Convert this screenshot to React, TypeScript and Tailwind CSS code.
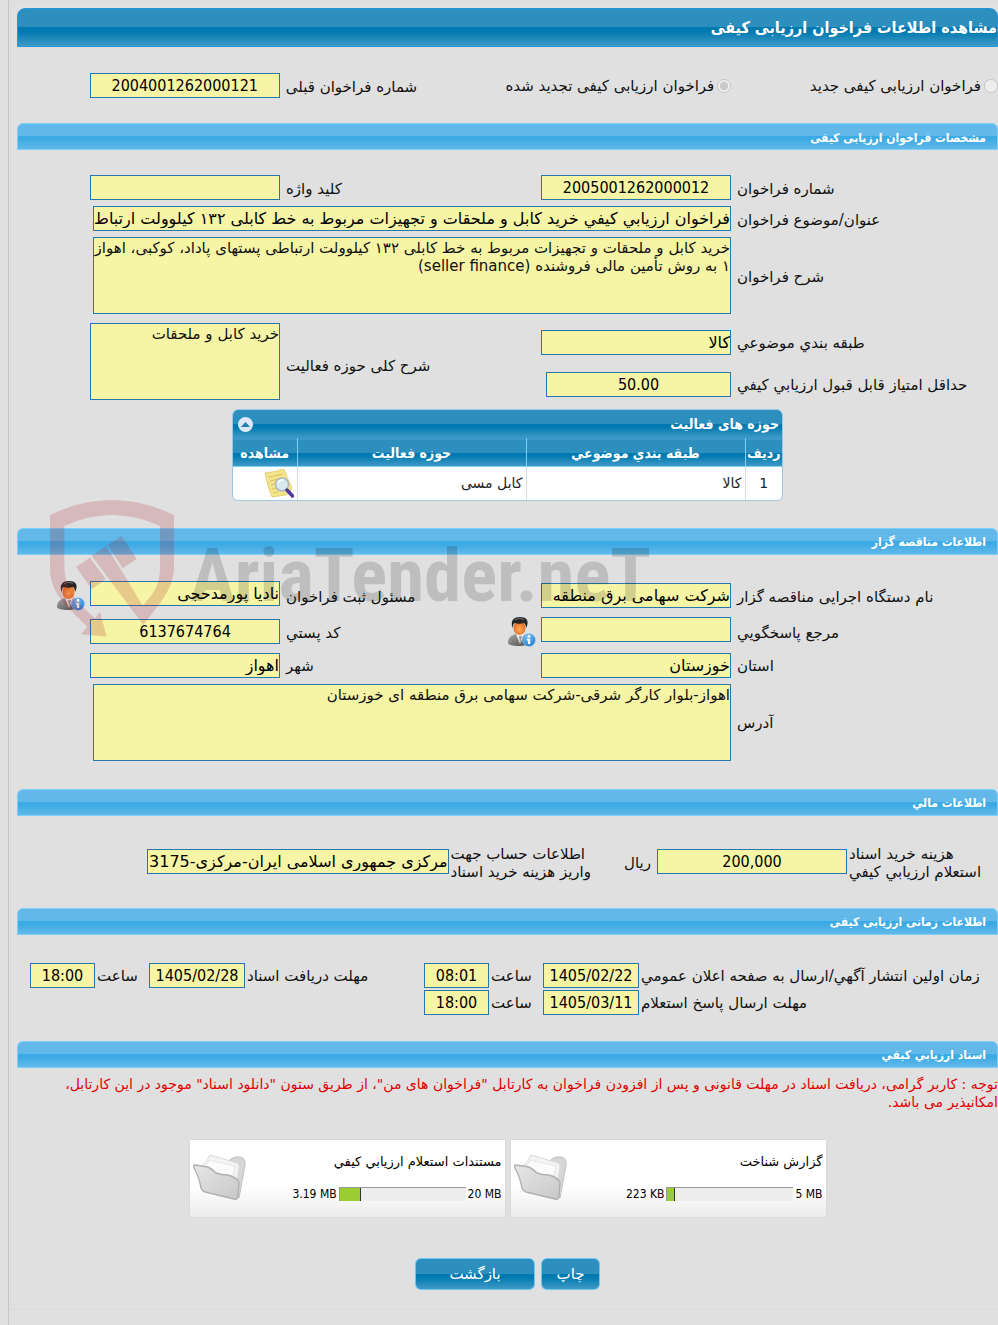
import React, { useState } from 'react';
import clsx from 'clsx';

interface DocumentFolder {
  title: string;
  used: string;
  limit: string;
  percent: number;
}

const folders: DocumentFolder[] = [
  { title: 'گزارش شناخت', used: '223 KB', limit: '5 MB', percent: 6 },
  { title: 'مستندات استعلام ارزيابي كيفي', used: '3.19 MB', limit: '20 MB', percent: 17 },
];

const activities = [{ row: 1, category: 'کالا', field: 'کابل مسی' }];

const CONDENSED = "font-['DejaVu_Sans_Condensed','DejaVu_Sans',sans-serif]";

const DARK_BAR =
  'bg-[linear-gradient(to_bottom,#2c8fbe_0%,#2c8fbe_50%,#0079b0_50%,#0079b0_60%,#409ac6_100%)]';
const LIGHT_BAR =
  'bg-[linear-gradient(to_bottom,#62b9e9_0%,#62b9e9_48%,#3caae4_50%,#3caae4_60%,#62b9e9_100%)]';

const FORM_GRID = 'grid grid-cols-[261fr_225fr_214fr_263fr] gap-x-[6px] gap-y-[6px] items-center';
const TIME_GRID =
  'grid grid-cols-[357fr_96px_50fr_65px_175fr_96px_50fr_65px_11fr] gap-x-[2px] gap-y-[2px] items-center';

function Label({ htmlFor, children, className }: { htmlFor: string; children: React.ReactNode; className?: string }) {
  return (
    <label htmlFor={htmlFor} className={clsx('block pt-[2px] text-left whitespace-nowrap', className)}>
      {children}
    </label>
  );
}

interface FieldProps {
  id: string;
  value?: string;
  numeric?: boolean;
  className?: string;
}

function Field({ id, value = '', numeric, className }: FieldProps) {
  return (
    <input
      id={id}
      type="text"
      readOnly
      value={value}
      className={clsx(
        'h-[25px] min-w-0 shrink-0 border border-[#2478ad] bg-[#f6f4a5] p-0 text-base text-black outline-none',
        numeric && CONDENSED,
        numeric && 'text-center',
        className ?? 'w-[190px]'
      )}
    />
  );
}

function Area({ id, value, className }: { id: string; value: string; className: string }) {
  return (
    <textarea
      id={id}
      readOnly
      value={value}
      className={clsx(
        'block h-[77px] resize-none border border-[#2478ad] bg-[#f6f4a5] px-0 py-px leading-[18px] outline-none',
        className
      )}
    />
  );
}

function SectionBar({ title, className }: { title: string; className?: string }) {
  return (
    <h2
      className={clsx(
        'flex h-[27px] items-center rounded-t-md border border-[#7ccff8] pt-[2px] pr-[11px] text-xs font-bold text-white',
        CONDENSED,
        LIGHT_BAR,
        className
      )}
    >
      {title}
    </h2>
  );
}

function UserInfoIcon() {
  return (
    <svg width="29" height="30" viewBox="0 0 29 30">
      <defs>
        <linearGradient id="suit" x1="0" y1="0" x2="1" y2="1">
          <stop offset="0" stopColor="#a8a8a8" />
          <stop offset="1" stopColor="#4a4a4a" />
        </linearGradient>
        <radialGradient id="face" cx=".5" cy=".6" r=".6">
          <stop offset="0" stopColor="#ffab5c" />
          <stop offset="1" stopColor="#e0661c" />
        </radialGradient>
        <radialGradient id="badge" cx=".4" cy=".3" r=".8">
          <stop offset="0" stopColor="#7cc4f8" />
          <stop offset="1" stopColor="#1b74cc" />
        </radialGradient>
      </defs>
      <path d="M1 26c0-5 3-8 8-9h6c5 1 7 4 7 9 0 4-21 4-21 0Z" fill="url(#suit)" />
      <path d="m9 17 4 10 4-10Z" fill="#f2f2f2" />
      <path d="m12 19 1 8 2-8Z" fill="#9a9a9a" />
      <ellipse cx="12.500" cy="11" rx="6" ry="7" fill="url(#face)" />
      <path d="M5 9C4 3 7 0 13 0s9 3 7 9l-1 2c0-3-1-4-2-5-4 1-6 1-9 0-2 1-2 2-2 5Z" fill="#262626" />
      <path d="M8 3c3-2 7-2 9 0" stroke="#777" fill="none" />
      <circle cx="22" cy="23" r="6.500" fill="url(#badge)" stroke="#a9d4f6" strokeWidth=".6" />
      <circle cx="22" cy="19.500" r="1.400" fill="#fff" />
      <path d="M20 22h3.200v5H21v-3.600h-1Z" fill="#fff" />
    </svg>
  );
}

function ViewIcon() {
  return (
    <svg width="30" height="29" viewBox="0 0 30 29">
      <path d="M1 4Q11 3 20 0q3 9 8 19-2 5-6 7-8 1-14 2Q3 16 1 4Z" fill="#f4e58c" stroke="#dcc766" strokeWidth=".8" />
      <path d="m5 8 14-3M6 12l13-3M7 16l8-2M8 20l5-1M9 24l5-1" stroke="#d9c15a" />
      <circle cx="18" cy="15.500" r="6.500" fill="#d6eaf6" fillOpacity=".92" stroke="#a9b9c4" strokeWidth="1.500" />
      <path d="M14 14q2-4 6-3" stroke="#fff" strokeWidth="1.500" fill="none" />
      <path d="m23 21 5.500 6" stroke="#51389a" strokeWidth="3.500" strokeLinecap="round" />
    </svg>
  );
}

function FolderIcon() {
  return (
    <svg width="54" height="48" viewBox="0 0 54 48" className="block">
      <defs>
        <linearGradient id="folder-front" x1="0" y1="0" x2="1" y2="1">
          <stop offset="0" stopColor="#e6e6e6" />
          <stop offset="1" stopColor="#c8c8c8" />
        </linearGradient>
      </defs>
      <path d="M30 12 38 5q4-3 9-2 6 1 5 8l-6 33Z" fill="#d6d6d6" stroke="#c2c2c2" />
      <path d="M9 12Q15 6 17 1l27 8q3 1 2 5l-3 18Z" fill="#f4f4f4" stroke="#dadada" />
      <path d="M11 13q4-3 5-7l26 6-3 18Z" fill="#fbfbfb" stroke="#e6e6e6" />
      <path
        d="M2 11l13 2q4 2 8 6 5 2 12 2 8 2 11 7l-1 14q0 4-4 3L12 38q-3-1-4-4Q6 23 1 14 0 11 2 11Z"
        fill="url(#folder-front)"
        stroke="#b0b0b0"
        strokeWidth="1.400"
        strokeLinejoin="round"
      />
    </svg>
  );
}

function Watermark() {
  return (
    <div dir="ltr" aria-hidden="true" className="pointer-events-none absolute -top-[28px] left-[33px] z-10 flex">
      <svg width="124" height="137" viewBox="150 30 372 411" fill="#ae1d27" fillOpacity=".2">
        <path d="M150 75Q336-15 522 75V235C520 300 475 345 430 405L275 197 318 168 365 242 428 347C455 318 480 290 480 235V108Q336 42 193 108V235C195 290 225 335 285 385L300 365 320 440 243 433 262 410C200 350 150 310 150 235Z" />
        <path d="M228 230 270 203 317 267 275 298ZM323 165 365 138 410 207 368 235Z" />
      </svg>
      <span className="mt-[30px] ml-4 font-['Roboto_Condensed','Roboto',sans-serif] text-[75px] leading-[90px] font-bold text-black/15">
        AriaTender.neT
      </span>
    </div>
  );
}

function ActivityTable() {
  const [open, setOpen] = useState(true);
  const th = 'border-l border-[#7ccff8] p-0 text-center font-bold last:border-l-0';
  const td = 'border-l border-[#dcdcdc] px-[3px] py-0 last:border-l-0';

  return (
    <div className="mx-auto mt-[2px] w-[551px] overflow-hidden rounded-md border border-[#9fc6e0] bg-white">
      <div className={clsx('flex h-[28px] items-center justify-between pr-[3px] pl-[5px] text-sm text-white', CONDENSED, DARK_BAR)}>
        <h3 className="font-bold">حوزه های فعالیت</h3>
        <button
          type="button"
          aria-label="باز و بسته کردن"
          onClick={() => setOpen(!open)}
          className="flex size-[15px] items-center justify-center rounded-full bg-[#dfe8f6]"
        >
          <svg width="9" height="5" viewBox="0 0 9 5">
            <path d="M0 5 4.500 0 9 5Z" fill="#1b7fb4" />
          </svg>
        </button>
      </div>
      {open && (
        <table className="w-full table-fixed border-collapse text-sm">
          <thead>
            <tr
              className={clsx(
                'h-[28px] border-t border-b border-t-[#3a94d4] border-b-[#7ccff8] text-white',
                CONDENSED,
                DARK_BAR
              )}
            >
              <th className={clsx(th, 'w-[37px]')}>ردیف</th>
              <th className={clsx(th, 'w-[219px]')}>طبقه بندي موضوعي</th>
              <th className={th}>حوزه فعالیت</th>
              <th className={clsx(th, 'w-[64px]')}>مشاهده</th>
            </tr>
          </thead>
          <tbody className="text-[#222]">
            {activities.map((a) => (
              <tr key={a.row} className="h-[33px]">
                <td className={clsx(td, 'text-center')}>{a.row}</td>
                <td className={td}>{a.category}</td>
                <td className={td}>{a.field}</td>
                <td className={td}>
                  <button type="button" aria-label="مشاهده" className="block">
                    <ViewIcon />
                  </button>
                </td>
              </tr>
            ))}
          </tbody>
        </table>
      )}
    </div>
  );
}

function FolderCard({ folder }: { folder: DocumentFolder }) {
  return (
    <div className="flex h-[79px] w-[317px] items-center justify-between border border-[#dadada] bg-linear-to-b from-white from-60% to-[#ececec] px-[3px] text-black">
      <div className="flex flex-col gap-4">
        <span className="text-[13px] leading-4">{folder.title}</span>
        <div className={clsx('flex items-center gap-[2px] text-xs leading-4', CONDENSED)}>
          <span>
            <bdi>{folder.limit}</bdi>
          </span>
          <div
            dir="ltr"
            role="progressbar"
            aria-label={folder.title}
            aria-valuenow={folder.percent}
            className="h-[14px] w-[127px] border-t border-l border-[#999] bg-[#ededed]"
          >
            <div className="h-full border-r border-[#333] bg-[#9acd32]" style={{ width: `${folder.percent}%` }} />
          </div>
          <span>
            <bdi>{folder.used}</bdi>
          </span>
        </div>
      </div>
      <FolderIcon />
    </div>
  );
}

function ActionButton({ children, className }: { children: React.ReactNode; className: string }) {
  return (
    <button
      type="button"
      className={clsx('h-[32px] rounded-md border border-[#6cc6f2] text-white', DARK_BAR, className)}
    >
      {children}
    </button>
  );
}

export default function App() {
  return (
    <div
      dir="rtl"
      lang="fa"
      className="min-h-screen overflow-x-hidden bg-[#e0e0e0] pl-2 font-['DejaVu_Sans',sans-serif] text-[15px] leading-[18px] text-[#111]"
    >
      <div className="min-h-screen border-l border-[#c6c6c6] pt-px pl-px">
        <main className="border-t border-b border-l border-[#dadada] pt-[6px] pb-[19px] pl-[6px]">
          <h1
            className={clsx(
              'flex h-[39px] items-center rounded-t-lg border border-[#2593de] text-base font-bold text-white',
              CONDENSED,
              DARK_BAR
            )}
          >
            مشاهده اطلاعات فراخوان ارزیابی کیفی
          </h1>

          <div className={clsx(FORM_GRID, 'mt-[26px]')}>
            <label className="flex items-center gap-[3px] whitespace-nowrap">
              <input type="radio" name="kind" disabled className="size-[14px]" />
              فراخوان ارزیابی کیفی جدید
            </label>
            <label className="flex items-center gap-[3px] whitespace-nowrap">
              <input type="radio" name="kind" disabled defaultChecked className="size-[14px]" />
              فراخوان ارزیابی کیفی تجدید شده
            </label>
            <Label htmlFor="previous">شماره فراخوان قبلی</Label>
            <Field id="previous" value="2004001262000121" numeric />
          </div>

          <SectionBar title="مشخصات فراخوان ارزیابی کیفی" className="mt-[25px]" />
          <div className={clsx(FORM_GRID, 'mt-[25px]')}>
            <Label htmlFor="number">شماره فراخوان</Label>
            <Field id="number" value="2005001262000012" numeric />
            <Label htmlFor="keyword">کلید واژه</Label>
            <Field id="keyword" />

            <Label htmlFor="subject">عنوان/موضوع فراخوان</Label>
            <div className="col-span-3">
              <Field
                id="subject"
                value="فراخوان ارزيابي كيفي خريد کابل و ملحقات و تجهیزات مربوط به خط کابلی ۱۳۲ کیلوولت ارتباط"
                className="w-[638px]"
              />
            </div>

            <Label htmlFor="description">شرح فراخوان</Label>
            <div className="col-span-3">
              <Area
                id="description"
                className="w-[638px]"
                value="خرید کابل و ملحقات و تجهیزات مربوط به خط کابلی ۱۳۲ کیلوولت ارتباطی پستهای پاداد، کوکبی، اهواز ۱ به روش تأمین مالی فروشنده (seller finance)"
              />
            </div>
          </div>

          <div className="mt-[9px] grid grid-cols-[261fr_225fr_214fr_263fr] grid-rows-[38px_46px] items-center gap-x-[6px]">
            <Label htmlFor="category">طبقه بندي موضوعي</Label>
            <Field id="category" value="كالا" />
            <Label htmlFor="scope" className="row-span-2">
              شرح کلی حوزه فعالیت
            </Label>
            <div className="row-span-2 self-start">
              <Area id="scope" className="w-[190px]" value="خرید کابل و ملحقات" />
            </div>
            <Label htmlFor="score">حداقل امتیاز قابل قبول ارزيابي كيفي</Label>
            <Field id="score" value="50.00" numeric className="w-[185px]" />
          </div>

          <ActivityTable />

          <section className="relative mt-[27px]">
            <SectionBar title="اطلاعات مناقصه گزار" />
            <Watermark />
            <div className={clsx(FORM_GRID, 'mt-[26px] grid-rows-[30px_30px_25px_77px]')}>
              <Label htmlFor="agency">نام دستگاه اجرایی مناقصه گزار</Label>
              <Field id="agency" value="شرکت سهامی برق منطقه" />
              <Label htmlFor="registrar">مسئول ثبت فراخوان</Label>
              <div className="flex items-start gap-[5px]">
                <Field id="registrar" value="نادیا پورمدحجی" />
                <button type="button" aria-label="اطلاعات مسئول ثبت">
                  <UserInfoIcon />
                </button>
              </div>

              <Label htmlFor="contact">مرجع پاسخگويي</Label>
              <div className="flex items-start gap-[5px]">
                <Field id="contact" />
                <button type="button" aria-label="اطلاعات مرجع پاسخگويي">
                  <UserInfoIcon />
                </button>
              </div>
              <Label htmlFor="postal">کد پستي</Label>
              <Field id="postal" value="6137674764" numeric />

              <Label htmlFor="province">استان</Label>
              <Field id="province" value="خوزستان" />
              <Label htmlFor="city">شهر</Label>
              <Field id="city" value="اهواز" />

              <Label htmlFor="address">آدرس</Label>
              <div className="col-span-3">
                <Area
                  id="address"
                  className="w-[638px]"
                  value="اهواز-بلوار کارگر شرقی-شرکت سهامی برق منطقه ای خوزستان"
                />
              </div>
            </div>
          </section>

          <SectionBar title="اطلاعات مالي" className="mt-[28px]" />
          <div className="mt-[27px] flex items-center gap-[2px]">
            <Label htmlFor="fee" className="min-w-[149px] flex-[149]">
              <span className="block">هزینه خرید اسناد</span>
              <span className="block">استعلام ارزيابي كيفي</span>
            </Label>
            <Field id="fee" value="200,000" numeric />
            <span className="w-[62px] pt-[2px] pr-1">ریال</span>
            <Label htmlFor="account">
              <span className="block">اطلاعات حساب جهت</span>
              <span className="block">واریز هزینه خرید اسناد</span>
            </Label>
            <Field id="account" value="مرکزی جمهوری اسلامی ایران-مرکزی-3175" className="w-[302px]" />
            <span className="flex-[128]" />
          </div>

          <SectionBar title="اطلاعات زمانی ارزیابی کیفی" className="mt-[27px]" />
          <div className={clsx(TIME_GRID, 'mt-[28px]')}>
            <Label htmlFor="publish-date">زمان اولین انتشار آگهي/ارسال به صفحه اعلان عمومي</Label>
            <Field id="publish-date" value="1405/02/22" numeric className="w-full" />
            <Label htmlFor="publish-time">ساعت</Label>
            <Field id="publish-time" value="08:01" numeric className="w-full" />
            <Label htmlFor="docs-date">مهلت دریافت اسناد</Label>
            <Field id="docs-date" value="1405/02/28" numeric className="w-full" />
            <Label htmlFor="docs-time">ساعت</Label>
            <Field id="docs-time" value="18:00" numeric className="w-full" />
            <Label htmlFor="reply-date" className="col-start-1">
              مهلت ارسال پاسخ استعلام
            </Label>
            <Field id="reply-date" value="1405/03/11" numeric className="w-full" />
            <Label htmlFor="reply-time">ساعت</Label>
            <Field id="reply-time" value="18:00" numeric className="w-full" />
          </div>

          <SectionBar title="اسناد ارزيابي كيفي" className="mt-[26px]" />
          <p className="mt-[7px] text-sm leading-[18px] text-[#e00000]">
            توجه : کاربر گرامی، دریافت اسناد در مهلت قانونی و پس از افزودن فراخوان به کارتابل "فراخوان های من"، از طریق
            ستون "دانلود اسناد" موجود در این کارتابل، امکانپذیر می باشد.
          </p>
          <div className="mt-[28px] flex flex-wrap justify-center gap-1">
            {folders.map((f) => (
              <FolderCard key={f.title} folder={f} />
            ))}
          </div>

          <div className="mt-[40px] flex justify-center gap-[6px]">
            <ActionButton className="w-[59px]">چاپ</ActionButton>
            <ActionButton className="w-[120px]">بازگشت</ActionButton>
          </div>
        </main>
      </div>
    </div>
  );
}
